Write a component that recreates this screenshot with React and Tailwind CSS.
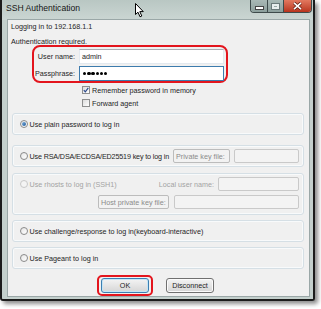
import React from 'react';

const Radio = ({ checked, disabled }) => (
  <span
    className={`w-[8px] h-[8px] rounded-full border shrink-0 flex items-center justify-center ${
      disabled ? 'border-[#c8c8c8] bg-[#f4f4f4]' : 'border-[#8a8a8a] bg-gradient-to-br from-[#e6e6e6] to-[#ffffff]'
    }`}
  >
    {checked && <span className="w-[4px] h-[4px] rounded-full bg-gradient-to-br from-[#7fb0dd] to-[#1c5a9a]" />}
  </span>
);

const Check = ({ checked }) => (
  <span className="w-[8px] h-[8px] border border-[#8e8f8f] bg-gradient-to-br from-[#dcdcdc] to-[#ffffff] shrink-0 flex items-center justify-center">
    {checked && (
      <svg width="6" height="6" viewBox="0 0 6 6">
        <path d="M0.8 3.2 L2.3 4.8 L5.3 0.8" fill="none" stroke="#2b4a8c" strokeWidth="1.2" />
      </svg>
    )}
  </span>
);

const Group = ({ className, children }) => (
  <div className={`ml-[4px] w-[292px] rounded-[3px] border border-[#d5dfe5] shadow-[inset_0_0_0_1px_#f8fafb] whitespace-nowrap ${className}`}>
    {children}
  </div>
);

const LabelBox = ({ w, children }) => (
  <div className={`${w} h-[14px] shrink-0 border border-[#bcbcbc] rounded-[2px] flex items-center pl-[2px] text-[#8a8a8a] bg-[#f2f2f2]`}>
    {children}
  </div>
);

const Field = ({ w }) => (
  <div className={`${w} h-[14px] shrink-0 border border-[#c9c9c9] rounded-[2px] bg-[#f3f3f3]`} />
);

export default function App() {
  return (
    <div className="w-[321px] h-[309px] bg-white overflow-hidden relative font-['Liberation_Sans',Arial,sans-serif] text-[7.2px] text-[#1e1e1e] leading-[9px] whitespace-nowrap">
      <div className="w-[315px] h-[301px] flex flex-col bg-[#c4d0cd] border-x-2 border-b-2 border-[#1c1c1c] rounded-b-[3px] shadow-[3px_3px_4px_rgba(0,0,0,0.45)]">
        {/* title bar */}
        <div className="h-[20px] flex items-start bg-gradient-to-b from-[#b9c7c3] to-[#cbd6d3]">
          <span className="pl-[4px] pt-[3px] text-[8.6px] leading-[10px] text-[#151515]">SSH Authentication</span>
          <div className="ml-auto mr-[1px] flex h-[13px] border border-t-0 border-[#3e4b4b] rounded-b-[4px] overflow-hidden">
            <div className="w-[16px] flex items-center justify-center bg-gradient-to-b from-[#a9b9b6] to-[#8c9f9c]">
              <span className="w-[7px] h-[2px] bg-white border border-[#444] mt-[3px] box-content" />
            </div>
            <div className="w-[16px] flex items-center justify-center border-l border-[#3e4b4b] bg-gradient-to-b from-[#a9b9b6] to-[#8c9f9c]">
              <span className="w-[7px] h-[5px] border-2 border-[#e8eeee] outline outline-1 outline-[#6b7a7a]" />
            </div>
            <div className="w-[28px] flex items-center justify-center border-l border-[#3e4b4b] bg-gradient-to-b from-[#e2785f] to-[#b8331c]">
              <svg width="9" height="8" viewBox="0 0 9 8">
                <path d="M1 0.8 L8 7.2 M8 0.8 L1 7.2" stroke="#5a1a10" strokeWidth="3" />
                <path d="M1 0.8 L8 7.2 M8 0.8 L1 7.2" stroke="#ffffff" strokeWidth="1.6" />
              </svg>
            </div>
          </div>
        </div>

        {/* client */}
        <div className="pl-[6px] pr-[4px] pb-[3px]">
          <div className="w-[301px] h-[276px] bg-[#f0f0f0] shadow-[0_0_0_1px_#9aa7a7] flex flex-col">
            <div className="pl-[3px] pt-[2px]">Logging in to 192.168.1.1</div>
            <div className="pl-[3px] mt-[6px]">Authentication required.</div>

            <div className="ml-[24px] mt-[-1px] w-[196px] h-[38px] border-2 border-[#e3151d] rounded-[8px] flex flex-col pt-[2px] gap-[2px]">
              <div className="flex items-center">
                <span className="w-[41px] text-right">User name:</span>
                <div className="ml-[4px] w-[145px] h-[15px] bg-white border border-[#e3e9ef] border-t-[#abadb3] flex items-center pl-[2px]">
                  admin
                </div>
              </div>
              <div className="flex items-center">
                <span className="w-[41px] text-right">Passphrase:</span>
                <div className="ml-[4px] w-[145px] h-[15px] bg-white border border-[#3d7bad] flex items-center pl-[3px] gap-[0.8px]">
                  {[0, 1, 2, 3, 4, 5].map((i) => (
                    <span key={i} className="w-[3.4px] h-[3.4px] rounded-full bg-black" />
                  ))}
                </div>
              </div>
            </div>

            <div className="ml-[74px] mt-[2px] h-[10px] flex items-center gap-[2px]">
              <Check checked />
              <span>Remember password in memory</span>
            </div>
            <div className="ml-[74px] mt-[3px] h-[10px] flex items-center gap-[2px]">
              <Check />
              <span>Forward agent</span>
            </div>

            <Group className="mt-[5px] h-[22px] flex items-center pl-[7px] gap-[1.5px]">
              <Radio checked />
              <span>Use plain password to log in</span>
            </Group>

            <Group className="mt-[10px] h-[22px] flex items-center pl-[7px]">
              <Radio />
              <span className="ml-[1.5px] tracking-[-0.15px]">Use RSA/DSA/ECDSA/ED25519 key to log in</span>
              <div className="ml-auto mr-[4px] flex items-center gap-[4px]">
                <LabelBox w="w-[57px]">Private key file:</LabelBox>
                <Field w="w-[65px]" />
              </div>
            </Group>

            <Group className="mt-[6px] h-[42px] flex flex-col pt-[3px]">
              <div className="h-[14px] flex items-center pl-[7px] text-[#a3a3a3]">
                <Radio disabled />
                <span className="ml-[1.5px]">Use rhosts to log in (SSH1)</span>
                <span className="ml-auto">Local user name:</span>
                <div className="ml-[4px] mr-[4px]">
                  <Field w="w-[81px]" />
                </div>
              </div>
              <div className="mt-[4px] flex items-center justify-end gap-[5px] pr-[4px]">
                <LabelBox w="w-[71px]">Host private key file:</LabelBox>
                <Field w="w-[125px]" />
              </div>
            </Group>

            <Group className="mt-[5px] h-[22px] flex items-center pl-[7px] gap-[1.5px]">
              <Radio />
              <span>Use challenge/response to log in(keyboard-interactive)</span>
            </Group>

            <Group className="mt-[5px] h-[22px] flex items-center pl-[7px] gap-[1.5px]">
              <Radio />
              <span>Use Pageant to log in</span>
            </Group>

            <div className="mt-[6px] flex items-center">
              <div className="ml-[89px] w-[56px] h-[21px] border-2 border-[#e3151d] rounded-[5px] flex items-center justify-center">
                <button className="w-[48px] h-[15px] rounded-[3px] border border-[#3c7fb1] bg-gradient-to-b from-[#f4f4f4] to-[#d6d6d6] shadow-[inset_0_0_0_1px_#c4e5f6] text-[7.2px] leading-none">
                  OK
                </button>
              </div>
              <button className="ml-[13px] w-[48px] h-[15px] rounded-[3px] border border-[#707070] bg-gradient-to-b from-[#f4f4f4] to-[#d6d6d6] shadow-[inset_0_0_0_1px_#fbfbfb] text-[7.2px] leading-none">
                Disconnect
              </button>
            </div>
          </div>
        </div>
      </div>

      {/* mouse pointer */}
      <svg className="absolute left-[135px] top-[3px]" width="10" height="15" viewBox="0 0 10 15">
        <path d="M0.5 0.5 L0.5 11.5 L3 9.2 L5 13.8 L6.8 13 L4.8 8.6 L8.3 8.6 Z" fill="#ffffff" stroke="#000000" strokeWidth="1" strokeLinejoin="round" />
      </svg>
    </div>
  );
}
